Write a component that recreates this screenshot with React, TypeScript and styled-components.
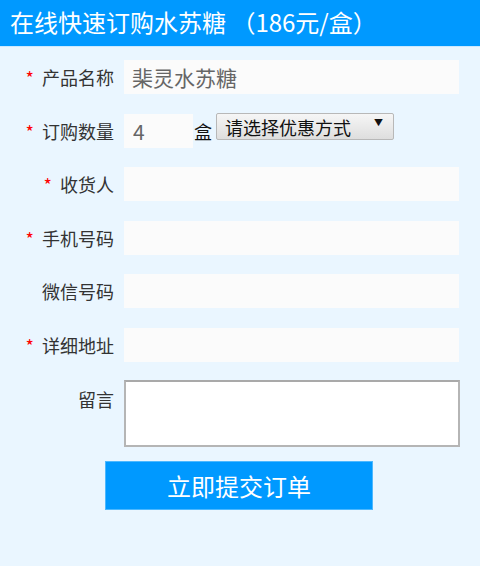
import React, { FC } from "react";
import styled, { createGlobalStyle } from "styled-components";

const GlobalStyle = createGlobalStyle`
  html, body {
    margin: 0;
    padding: 0;
    background: #eaf6ff;
    font-family: "Noto Sans CJK SC", "Noto Sans", sans-serif;
  }
`;

interface Field {
  label: string;
  required?: boolean;
}

const fields: Field[] = [
  { label: "收货人", required: true },
  { label: "手机号码", required: true },
  { label: "微信号码" },
  { label: "详细地址", required: true },
];

const App: FC = () => {
  return (
    <Page>
      <GlobalStyle />
      <Header>在线快速订购水苏糖 （186元/盒）</Header>
      <Form>
        <Row>
          <Label>
            <Star>*</Star>产品名称
          </Label>
          <Input defaultValue="棐灵水苏糖" readOnly />
        </Row>
        <Row>
          <Label>
            <Star>*</Star>订购数量
          </Label>
          <QtyInput defaultValue="4" />
          <Unit>盒</Unit>
          <Select>
            <span>请选择优惠方式</span>
            <Arrow>▼</Arrow>
          </Select>
        </Row>
        {fields.map((f) => (
          <Row key={f.label}>
            <Label>
              {f.required && <Star>*</Star>}
              {f.label}
            </Label>
            <Input />
          </Row>
        ))}
        <Row $top>
          <Label $top>留言</Label>
          <TextArea />
        </Row>
        <Submit>立即提交订单</Submit>
      </Form>
    </Page>
  );
};

const Page = styled.div`
  width: 480px;
  min-height: 566px;
  background: #eaf6ff;
`;

const Header = styled.div`
  height: 46px;
  line-height: 44px;
  background: #0099ff;
  border-bottom: 1px solid #cce9ff;
  color: #fff;
  font-size: 24px;
  padding-left: 10px;
  white-space: nowrap;
`;

const Form = styled.div`
  padding-top: 13px;
  display: flex;
  flex-direction: column;
  gap: 19.5px;
`;

const Row = styled.div<{ $top?: boolean }>`
  display: flex;
  align-items: ${(p) => (p.$top ? "flex-start" : "center")};
  height: ${(p) => (p.$top ? "auto" : "34px")};
  margin-top: ${(p) => (p.$top ? "-1px" : "0")};
`;

const Label = styled.div<{ $top?: boolean }>`
  width: 114px;
  margin-right: 10px;
  text-align: right;
  font-size: 18px;
  color: #333;
  white-space: nowrap;
  padding-top: ${(p) => (p.$top ? "6px" : "0")};
`;

const Star = styled.span`
  color: #f00;
  font-size: 18px;
  margin-right: 8px;
`;

const Input = styled.input`
  box-sizing: border-box;
  width: 335px;
  height: 34px;
  border: none;
  outline: none;
  background: #fbfbfb;
  padding: 0 8px;
  font-family: inherit;
  font-size: 21px;
  color: #666;
`;

const QtyInput = styled(Input)`
  width: 69px;
  padding: 0 9px;
`;

const Unit = styled.span`
  font-size: 18px;
  color: #111;
  margin: 0 4px 0 1px;
`;

const Select = styled.div`
  box-sizing: border-box;
  width: 178px;
  height: 27px;
  display: flex;
  align-items: center;
  justify-content: space-between;
  padding: 0 8px;
  border: 1px solid #b8b8b8;
  border-radius: 2px;
  background: linear-gradient(#f6f6f6, #dedede);
  font-size: 18px;
  color: #111;
  margin-top: -8px;
`;

const Arrow = styled.span`
  font-size: 9px;
  margin-top: -8px;
  margin-right: 2px;
`;

const TextArea = styled.textarea`
  box-sizing: border-box;
  width: 336px;
  height: 67px;
  border: 2px solid #b5b5b5;
  border-top-color: #a9a9a9;
  background: #fff;
  resize: none;
  outline: none;
`;

const Submit = styled.button`
  box-sizing: border-box;
  width: 268px;
  height: 49px;
  margin: -6px 0 0 105px;
  background: #0099ff;
  border: 1px solid #4cb8ff;
  color: #fff;
  font-family: inherit;
  font-size: 24px;
  cursor: pointer;
`;

export default App;
